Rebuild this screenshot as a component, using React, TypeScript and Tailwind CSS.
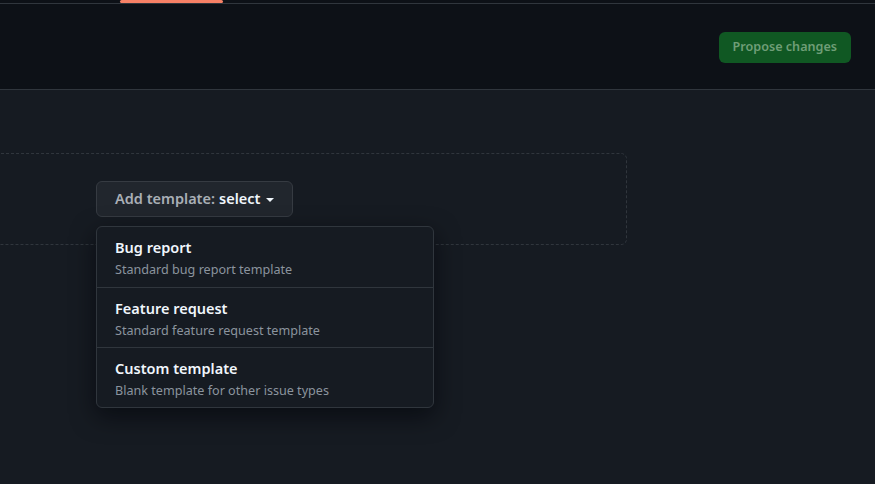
import React from 'react';

const templates = [
  { title: 'Bug report', desc: 'Standard bug report template' },
  { title: 'Feature request', desc: 'Standard feature request template' },
  { title: 'Custom template', desc: 'Blank template for other issue types' },
];

const App: React.FC = () => {
  return (
    <div
      className="w-[875px] h-[484px] overflow-hidden bg-[#161b22] flex flex-col"
      style={{ fontFamily: '"Segoe UI", "Noto Sans", "Open Sans", sans-serif' }}
    >
      {/* Tab strip */}
      <div className="h-[4px] bg-[#0d1117] border-b border-[#30363d] shrink-0 flex">
        <div className="ml-[120px] w-[103px] h-[3px] bg-[#f78166] rounded-sm" />
      </div>

      {/* Header */}
      <div className="h-[86px] bg-[#0d1117] border-b border-[#30363d] shrink-0 flex items-center justify-end pr-[24px]">
        <button className="h-[31px] mt-[1px] px-[14px] rounded-md bg-[#105823] text-[#6f9e77] text-[12.6px] font-semibold">
          Propose changes
        </button>
      </div>

      {/* Body */}
      <div className="pt-[63px]">
        <div className="-ml-[40px] w-[667px] border border-dashed border-[#30363d] rounded-md py-[27px] pl-[135px]">
          <div className="relative inline-block">
            <button className="h-[36px] px-[18px] flex items-center gap-[5px] rounded-md bg-[#21262d] border border-[#363b42] text-[14.5px] font-semibold">
              <span className="text-[#a9afb6]">Add template:</span>
              <span className="text-[#f0f6fc] -ml-[1px]">select</span>
              <svg width="8" height="4" viewBox="0 0 8 4" className="ml-[1px] mt-[1px]">
                <path d="M0 0h8L4 4z" fill="#f0f6fc" />
              </svg>
            </button>

            <div className="absolute left-0 top-[45px] w-[338px] rounded-md border border-[#30363d] bg-[#161b22] shadow-[0_8px_24px_rgba(1,4,9,0.6)] z-10">
              {templates.map((t, i) => (
                <div
                  key={t.title}
                  className={`h-[60px] pl-[18px] pt-[9px] ${i > 0 ? 'border-t border-[#30363d]' : ''}`}
                >
                  <div className="text-[14.5px] font-semibold text-[#f0f6fc] leading-[22px]">{t.title}</div>
                  <div className="text-[12.6px] text-[#8b949e] leading-[20px] mt-[2px]">{t.desc}</div>
                </div>
              ))}
            </div>
          </div>
        </div>
      </div>
    </div>
  );
};

export default App;
